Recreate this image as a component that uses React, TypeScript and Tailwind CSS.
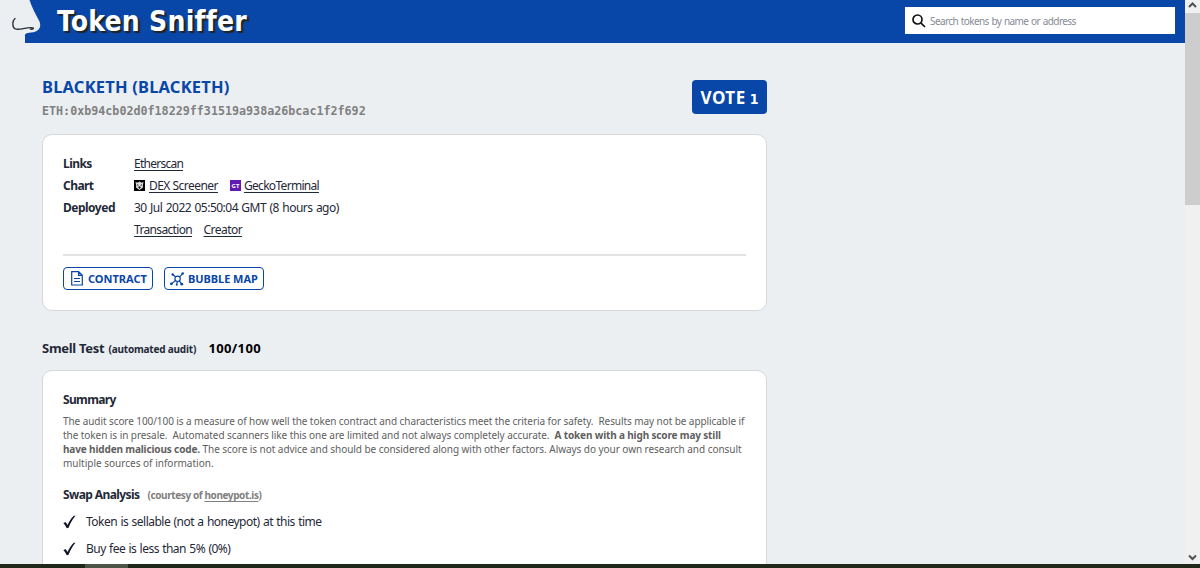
import React from "react";

function Check() {
  return (
    <svg className="h-[14px] w-[13px] shrink-0" viewBox="0 0 13 14" fill="#111827">
      <path d="M0.300 8.200 L2.500 7.100 C3.400 8.100 4 9 4.500 10 C6.200 6 8.500 2.700 10.800 0.700 L12.500 0.700 C9.700 3.900 7.400 8 5.600 12.700 L3.700 13.300 C2.800 11.200 1.800 9.500 0.300 8.200 Z" />
    </svg>
  );
}

function ContractIcon() {
  return (
    <svg className="h-[15px] w-[12px] shrink-0" viewBox="0 0 12 15" fill="none" stroke="#0846a8" strokeWidth="1.2">
      <path d="M0.700 0.700 H7.600 L11.300 4.300 V14 H0.700 Z M7.600 0.700 V4.300 H11.300 M3 7.500 H9 M3 10.500 H9" />
    </svg>
  );
}

function BubbleIcon() {
  return (
    <svg className="h-[14px] w-[14px] shrink-0" viewBox="0 0 14 14" fill="none" stroke="#0846a8" strokeWidth="1.2">
      <circle cx="7.600" cy="6.800" r="2.700" />
      <path d="M9.500 4.900 L12.500 1.800 M5.700 5 L3 2.800 M5.500 8.500 L1.600 11.600 M9.300 8.800 L11.500 11.800 M7.400 9.500 L6.700 12.500" />
      <g fill="#0846a8" stroke="none">
        <circle cx="12.700" cy="1.500" r="1.300" />
        <circle cx="2.700" cy="2.500" r="1.200" />
        <circle cx="1.400" cy="11.800" r="1.400" />
        <circle cx="11.800" cy="12.200" r="1.400" />
        <circle cx="6.700" cy="12.800" r="1" />
      </g>
    </svg>
  );
}

function DexIcon() {
  return (
    <svg className="h-[11px] w-[11px] shrink-0" viewBox="0 0 11 11">
      <rect width="11" height="11" fill="#000" />
      <path d="M1.500 2 L3.500 2.700 L5.500 1.500 L7.500 2.700 L9.500 2 L8.800 5.500 L9 7.500 L5.500 10 L2 7.500 L2.200 5.500 Z" fill="#ddd" />
      <path d="M3 4 L4.800 5.200 L3.500 5.800 Z M8 4 L6.200 5.200 L7.500 5.800 Z M4 7 L5.500 6.200 L7 7 L5.500 9 Z" fill="#111" />
    </svg>
  );
}

function Scrollbar() {
  return (
    <div className="flex w-[15px] shrink-0 flex-col items-center bg-[#f0f0f0]">
      <svg className="h-[13px] w-[15px] shrink-0" viewBox="0 0 15 13" fill="none" stroke="#505050" strokeWidth="2">
        <path d="M4 7 L7.500 3.500 L11 7" />
      </svg>
      <div className="h-[192px] w-full shrink-0 bg-[#cdcdcd]" />
      <div className="flex-1" />
      <svg className="h-[13px] w-[15px] shrink-0" viewBox="0 0 15 13" fill="none" stroke="#505050" strokeWidth="2">
        <path d="M4 4.500 L7.500 8 L11 4.500" />
      </svg>
    </div>
  );
}

export default function App() {
  return (
    <div className="flex h-[568px] w-[1200px] flex-col overflow-hidden bg-[#ebeff2] font-['Noto_Sans',sans-serif] text-[#1f2937]">
      <div className="flex h-[564px] shrink-0">
        <div className="h-[564px] w-[1185px] overflow-hidden">
          <header className="flex h-[43px] bg-[#0846a8]">
            <svg className="h-[43px] w-[42px] shrink-0" viewBox="0 0 42 43">
              <path d="M0 0 H29.500 C32 8 36 15 39.500 21.500 C42 28 38 32 31 32.500 C26 33 24.500 34 25 36 V43 H0 Z" fill="#ebeff2" />
              <path d="M15 18.500 C12 21 12 27.500 15.500 29 C20 30.300 26 27 33 27.800 C34 28.500 33 29.500 30.500 29.200" fill="none" stroke="#2b2f38" strokeWidth="1.300" strokeLinecap="round" />
            </svg>
            <h1 className="ml-[15px] mt-px whitespace-nowrap font-['DejaVu_Sans_Condensed','DejaVu_Sans',sans-serif] text-[28px] font-bold leading-[42px] tracking-[0.25px] text-white [text-shadow:2px_2px_1px_#222]">Token Sniffer</h1>
            <div className="ml-auto mr-[10px] mt-[7px] flex h-[27px] w-[270px] items-center bg-white pl-[7px]">
              <svg className="h-[14px] w-[14px] shrink-0" viewBox="0 0 14 14" fill="none" stroke="#111" strokeWidth="1.700">
                <circle cx="5.500" cy="5.500" r="4.500" /><path d="M8.800 8.800 L13 13" />
              </svg>
              <span className="ml-[4px] mt-px whitespace-nowrap text-[10px] tracking-[-0.6px] text-[#858b95] [word-spacing:0.7px]">Search tokens by name or address</span>
            </div>
          </header>
          <main className="ml-[42px] w-[725px] whitespace-nowrap">
            <div className="flex h-[91px] justify-between">
              <div className="pt-[32px]">
                <h2 className="h-[24px] text-[16.5px] font-bold leading-[24px] tracking-[0.19px] text-[#0846a8]">BLACKETH (BLACKETH)</h2>
                <p className="h-[24px] font-['DejaVu_Sans_Mono',monospace] text-[11.700px] font-bold leading-[24px] text-[#808080]">ETH:0xb94cb02d0f18229ff31519a938a26bcac1f2f692</p>
              </div>
              <button className="mt-[37px] flex h-[34px] w-[75px] items-baseline justify-center gap-[4px] rounded-[4px] bg-[#0846a8] font-bold leading-[35px] text-white"><span className="text-[17px] tracking-[0.5px]">VOTE</span><span className="font-['DejaVu_Sans_Condensed','DejaVu_Sans',sans-serif] text-[14px]">1</span></button>
            </div>
            <section className="h-[177px] rounded-[10px] border border-[#d6d8da] bg-white px-[20px] pt-[18px] text-[12px] leading-[21px]">
              <div className="flex h-[22px]"><b className="w-[71px] tracking-[-0.55px]">Links</b><a className="tracking-[-0.75px] underline underline-offset-2">Etherscan</a></div>
              <div className="flex h-[22px] items-start">
                <b className="w-[71px] tracking-[-0.55px]">Chart</b>
                <div className="mt-[5px]"><DexIcon /></div>
                <a className="ml-[4px] w-[69px] tracking-[-0.53px] underline underline-offset-2">DEX Screener</a>
                <span className="ml-[12px] mt-[5px] flex h-[11px] w-[11px] items-center justify-center bg-[#6419b4] text-[6px] font-bold leading-none text-white">GT</span>
                <a className="ml-[3px] tracking-[-0.7px] underline underline-offset-2">GeckoTerminal</a>
              </div>
              <div className="flex h-[22px]"><b className="w-[71px] tracking-[-0.5px]">Deployed</b><span className="tracking-[-0.5px] [word-spacing:0.7px]">30 Jul 2022 05:50:04 GMT (8 hours ago)</span></div>
              <div className="flex h-[22px] pl-[71px]">
                <a className="w-[58px] tracking-[-0.66px] underline underline-offset-2">Transaction</a>
                <a className="ml-[11.5px] tracking-[-0.54px] underline underline-offset-2">Creator</a>
              </div>
              <div className="mt-[13px] h-[2px] bg-[#e2e3e5]" />
              <div className="mt-[11px] flex gap-[11px] text-[11px] font-bold text-[#0846a8]">
                <button className="flex h-[23px] w-[90px] items-center rounded-[4px] border border-[#0846a8] pl-[7px]"><ContractIcon /><span className="ml-[5px]">CONTRACT</span></button>
                <button className="flex h-[23px] w-[100px] items-center rounded-[4px] border border-[#0846a8] pl-[5px]"><BubbleIcon /><span className="ml-[4px] tracking-[-0.05px]">BUBBLE MAP</span></button>
              </div>
            </section>
            <div className="flex h-[59px] items-baseline pt-[26px] font-bold leading-[22px]">
              <span className="w-[63px] text-[13px] tracking-[-0.28px]">Smell Test</span>
              <span className="ml-[3.5px] w-[88px] text-[10px] tracking-[-0.2px]">(automated audit)</span>
              <span className="ml-[12px] text-[13px] tracking-[0.35px] text-black">100/100</span>
            </div>
            <section className="h-[220px] rounded-t-[10px] border border-[#d6d8da] bg-white px-[20px] pt-[18px]">
              <h3 className="h-[22px] text-[12px] font-bold leading-[21px] tracking-[-0.65px]">Summary</h3>
              <div className="mt-[3px] text-[10px] leading-[14px] text-[#606060]">
                <div className="tracking-[-0.077px]">The audit score 100/100 is a measure of how well the token contract and characteristics meet the criteria for safety.&nbsp; Results may not be applicable if</div>
                <div className="tracking-[-0.06px]">the token is in presale.&nbsp; Automated scanners like this one are limited and not always completely accurate.&nbsp; <b className="tracking-[-0.15px]">A token with a high score may still</b></div>
                <div className="tracking-[-0.05px]"><b className="tracking-[-0.14px]">have hidden malicious code.</b> The score is not advice and should be considered along with other factors. Always do your own research and consult</div>
                <div>multiple sources of information.</div>
              </div>
              <div className="mt-[14px] flex h-[22px] items-baseline font-bold leading-[21px]">
                <span className="w-[77px] text-[12px] tracking-[-0.6px]">Swap Analysis</span>
                <span className="ml-[7.5px] text-[10px] tracking-[-0.4px] text-[#808080]">(courtesy of <a className="underline underline-offset-2">honeypot.is</a>)</span>
              </div>
              <div className="mt-[2px] flex h-[27px] items-center text-[12px]"><Check /><span className="ml-[10px] tracking-[-0.51px] [word-spacing:0.7px]">Token is sellable (not a honeypot) at this time</span></div>
              <div className="flex h-[27px] items-center text-[12px]"><Check /><span className="ml-[10px] tracking-[-0.52px] [word-spacing:0.7px]">Buy fee is less than 5% (0%)</span></div>
            </section>
          </main>
        </div>
        <Scrollbar />
      </div>
      <div className="h-[4px] bg-[#20281a] pl-[85px]"><div className="h-[4px] w-[43px] bg-[#4c5546]" /></div>
    </div>
  );
}
